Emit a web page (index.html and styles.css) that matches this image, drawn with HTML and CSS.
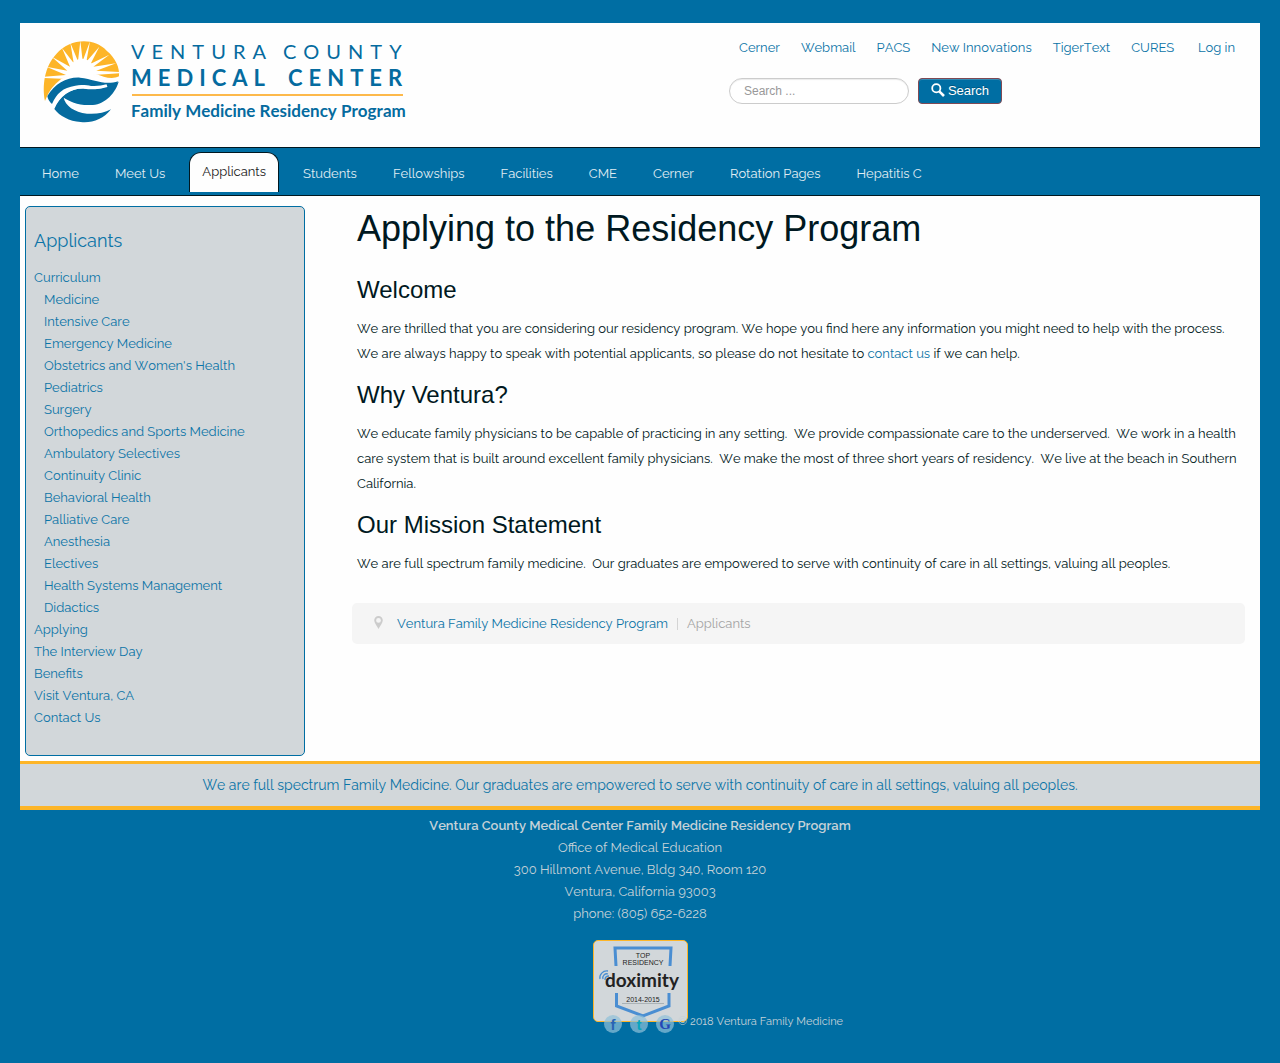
FILE: index.html
```html
<!DOCTYPE html>
<html lang="en">
<head>
<meta charset="utf-8">
<meta name="viewport" content="width=device-width, initial-scale=1">
<title>Applicants - Ventura Family Medicine Residency Program</title>
<link rel="stylesheet" href="styles.css">
</head>
<body>
<div class="page">
  <header class="header">
    <a class="logo" href="#" aria-label="Ventura County Medical Center home">
      <svg width="380" height="90" viewBox="0 0 380 90">
        <svg width="90" height="90" viewBox="0 0 270 270">
          <path fill="#fdb528" d="M27 195C18 150 25 92 61 54C100 9 171 2 212 44C239 66 252 96 249 121C226 132 203 122 178 113C145 104 98 108 66 137C47 153 36 171 27 195Z"/>
          <path fill="#fff" d="M24 122L90 117L31 92L94 104L47 62L102 92L78 36L113 81L103 20L126 76L133 14L140 75L162 16L151 77L190 32L164 83L220 56L172 92L240 82L181 104L250 108V112L184 116C150 108 105 113 78 128L24 126Z"/>
          <circle cx="138" cy="104" r="36" fill="#fff"/>
          <path fill="#fff" d="M30 197C38 160 79 117 127 116C180 116 205 138 250 124V142L55 215Z"/>
          <path fill="#056b9f" d="M34 180C58 142 92 123 132 125C177 130 203 149 247 136C230 158 204 157 180 153C150 147 135 146 118 149C80 155 62 172 48 204Q36 194 34 180Z"/>
          <path fill="#056b9f" d="M55 219C71 180 107 155 145 158C188 165 213 151 248 137C235 180 197 211 157 207C123 207 99 195 83 185C87 208 115 229 153 233C181 235 204 231 225 220C203 250 166 262 134 258C100 256 71 240 55 219Z"/>
          <path fill="none" stroke="#fff" stroke-width="9" d="M51 213C76 161 120 149 160 154C183 156 201 153 213 149"/>
        </svg>
        <g fill="#056b9f" class="logo-text">
          <text class="logo-light" x="95" y="23">VENTURA</text>
          <text class="logo-light" x="247" y="23">COUNTY</text>
          <text class="logo-bold" x="95" y="50">MEDICAL</text>
          <text class="logo-bold" x="252" y="50">CENTER</text>
          <text class="logo-sub" x="95" y="81">Family Medicine Residency Program</text>
        </g>
        <path fill="#fdb94b" d="M96 58h271v2H96z"/>
      </svg>
    </a>
    <div class="tools">
      <nav class="quick" aria-label="Quick links">
        <a href="#">Cerner</a><a href="#">Webmail</a><a href="#">PACS</a><a href="#">New Innovations</a><a href="#">TigerText</a><a href="#">CURES</a><a class="login" href="#">Log in</a>
      </nav>
      <form class="search">
        <input type="search" placeholder="Search ..." aria-label="Search">
        <button type="button"><svg width="14" height="14" viewBox="0 0 14 14"><circle cx="5.3" cy="5.3" r="4.1" fill="none" stroke="#fff" stroke-width="1.8"/><path d="M8.3 8.3L13 13" stroke="#fff" stroke-width="2.6"/></svg>Search</button>
      </form>
    </div>
  </header>
  <nav class="menu" aria-label="Main menu">
    <a href="#">Home</a><a href="#">Meet Us</a><a class="active" href="#">Applicants</a><a href="#">Students</a><a href="#">Fellowships</a><a href="#">Facilities</a><a href="#">CME</a><a href="#">Cerner</a><a href="#">Rotation Pages</a><a href="#">Hepatitis C</a>
  </nav>
  <div class="body">
    <aside class="side">
      <h3>Applicants</h3>
      <ul>
        <li><a href="#">Curriculum</a>
          <ul>
            <li><a href="#">Medicine</a></li>
            <li><a href="#">Intensive Care</a></li>
            <li><a href="#">Emergency Medicine</a></li>
            <li><a href="#">Obstetrics and Women's Health</a></li>
            <li><a href="#">Pediatrics</a></li>
            <li><a href="#">Surgery</a></li>
            <li><a href="#">Orthopedics and Sports Medicine</a></li>
            <li><a href="#">Ambulatory Selectives</a></li>
            <li><a href="#">Continuity Clinic</a></li>
            <li><a href="#">Behavioral Health</a></li>
            <li><a href="#">Palliative Care</a></li>
            <li><a href="#">Anesthesia</a></li>
            <li><a href="#">Electives</a></li>
            <li><a href="#">Health Systems Management</a></li>
            <li><a href="#">Didactics</a></li>
          </ul>
        </li>
        <li><a href="#">Applying</a></li>
        <li><a href="#">The Interview Day</a></li>
        <li><a href="#">Benefits</a></li>
        <li><a href="#">Visit Ventura, CA</a></li>
        <li><a href="#">Contact Us</a></li>
      </ul>
    </aside>
    <main class="content">
      <article>
        <h1>Applying to the Residency Program</h1>
        <h2>Welcome</h2>
        <p>We are thrilled that you are considering our residency program. We hope you find here any information you might need to help with the process. We are always happy to speak with potential applicants, so please do not hesitate to <a href="#">contact us</a> if we can help.</p>
        <h2>Why Ventura?</h2>
        <p>We educate family physicians to be capable of practicing in any setting.&nbsp; We provide compassionate care to the underserved.&nbsp; We work in a health care system that is built around excellent family physicians.&nbsp; We make the most of three short years of residency.&nbsp; We live at the beach in Southern California.</p>
        <h2>Our Mission Statement</h2>
        <p>We are full spectrum family medicine.&nbsp; Our graduates are empowered to serve with continuity of care in all settings, valuing all peoples.</p>
      </article>
      <nav class="crumbs" aria-label="Breadcrumb">
        <svg width="9" height="13" viewBox="0 0 9 13"><path fill="#ccc" fill-rule="evenodd" d="M4.500 0A4.300 4.300 0 0 0 .2 4.300C.2 7 3 10 4.500 13C6 10 8.800 7 8.800 4.300A4.300 4.300 0 0 0 4.500 0ZM4.500 2A2.400 2.400 0 1 1 4.500 6.800A2.400 2.400 0 0 1 4.500 2Z"/></svg>
        <a href="#">Ventura Family Medicine Residency Program</a><span class="current">Applicants</span>
      </nav>
    </main>
  </div>
  <div class="banner">We are full spectrum Family Medicine. Our graduates are empowered to serve with continuity of care in all settings, valuing all peoples.</div>
  <footer class="footer">
    <address>
      <strong>Ventura County Medical Center Family Medicine Residency Program</strong><br>
      Office of Medical Education<br>
      300 Hillmont Avenue, Bldg 340, Room 120<br>
      Ventura, California 93003<br>
      phone: (805) 652-6228
    </address>
    <a class="badge" href="#" aria-label="Doximity top residency 2014-2015">
      <svg width="93" height="80" viewBox="0 0 93 80">
        <g fill="none" stroke="#4a8ed2" stroke-width="3">
          <path d="M22 25L21 7H77L76 25"/>
          <path d="M22.500 52V65L49 75L75 65V52"/>
          <path stroke-width="1.300" d="M6 38C5 34 9 29 14 30M9 38C8 35 11 32 14 33M11 39C11 37 12 35 15 35"/>
        </g>
        <path stroke="#aab2b6" d="M28 62.500H70"/>
        <g text-anchor="middle" fill="#222">
          <text class="badge-small" x="49" y="17">TOP</text>
          <text class="badge-small" x="49" y="24">RESIDENCY</text>
          <text class="badge-name" x="48" y="46">doximity</text>
          <text class="badge-small" x="49" y="61">2014-2015</text>
        </g>
      </svg>
    </a>
    <div class="legal">
      <a href="#" aria-label="Facebook"><svg width="18" height="18" viewBox="0 0 18 18"><circle cx="9" cy="9" r="9" fill="#8fc0d8" opacity=".7"/><text class="glyph" x="9" y="15" fill="#2864b4">f</text></svg></a>
      <a href="#" aria-label="Twitter"><svg width="18" height="18" viewBox="0 0 18 18"><circle cx="9" cy="9" r="9" fill="#8fc0d8" opacity=".7"/><text class="glyph" x="9" y="15" fill="#08a5bd">t</text></svg></a>
      <a href="#" aria-label="Google"><svg width="18" height="18" viewBox="0 0 18 18"><circle cx="9" cy="9" r="9" fill="#8fc0d8" opacity=".7"/><text class="glyph glyph-serif" x="9" y="14" fill="#2447b5">G</text></svg></a>
      <span>© 2018 Ventura Family Medicine</span>
    </div>
  </footer>
</div>
</body>
</html>
```
FILE: styles.css
```css
* { box-sizing: border-box; }
body {
  margin: 0;
  background: #006ea3;
  color: #001821;
  font: 13px/22px Raleway, Lato, sans-serif;
  font-kerning: none;
}
a { color: #0b74a7; text-decoration: none; }
.page { padding: 23px 20px 29px; }

.header {
  display: flex;
  justify-content: space-between;
  min-height: 124px;
  padding: 13px 25px 13px 16px;
  background: #fefefe;
}
.logo svg { display: block; }
.logo-text { font-family: Lato, sans-serif; }
.logo-light { font-size: 20px; letter-spacing: 7px; }
.logo-bold { font-size: 22px; font-weight: 700; letter-spacing: 6px; }
.logo-sub { font-size: 17px; font-weight: 700; }
.tools { width: 506px; padding-top: 1px; }
.quick { display: flex; gap: 21px; padding-left: 10px; }
.login { margin-left: auto; }
.search { display: flex; gap: 9px; margin-top: 19px; }
.search input {
  width: 180px;
  height: 26px;
  padding: 0 14px;
  border: 1px solid #ccc;
  border-radius: 13px;
  background: #fff;
  box-shadow: inset 0 1px 1px rgba(0, 0, 0, .08);
  font: 12px "Liberation Sans", sans-serif;
}
.search input::placeholder { color: #999; }
.search button {
  display: flex;
  justify-content: center;
  gap: 3px;
  width: 84px;
  height: 26px;
  padding: 4px 0;
  border: 1px solid #804a55;
  border-radius: 4px;
  background: #006ea3;
  box-shadow: inset 0 1px 0 rgba(255, 255, 255, .2);
  color: #fff;
  font: 13px/16px "Liberation Sans", sans-serif;
  text-shadow: 0 -1px 0 rgba(0, 0, 0, .25);
}

.menu {
  display: flex;
  align-items: flex-start;
  gap: 12px;
  padding: 4px 10px 2px;
  border: solid #001821;
  border-width: 1px 0;
}
.menu a { padding: 11px 12px 8px; color: #e0edf3; }
.menu .active {
  padding: 8px 12px 9px;
  border: solid #001821;
  border-width: 1px 1px 0;
  border-radius: 12px 12px 0 0;
  background: #fefefe;
  color: #222;
}

.body {
  display: grid;
  grid-template-columns: 280px minmax(0, 1fr);
  gap: 47px;
  padding: 10px 15px 5px 5px;
  background: #fefefe;
}
.side {
  padding: 23px 8px 26px;
  border: 1px solid #006ea3;
  border-radius: 5px;
  background: #d2d7da;
}
.side h3 {
  margin: 0 0 15px;
  color: #0b74a7;
  font-size: 18px;
  font-weight: 400;
  line-height: 22px;
}
.side ul { margin: 0; padding: 0; list-style: none; }
.side ul ul { padding-left: 10px; }

.content article { padding: 0 5px; }
h1, h2 { font-family: "Liberation Sans", sans-serif; font-weight: 400; font-kerning: auto; }
h1 { margin: 0 0 16px; font-size: 36px; line-height: 46px; }
h2 { margin: 0 0 4px; font-size: 24px; line-height: 44px; }
p { margin: 0; line-height: 25px; }
p + h2 { margin-top: 7px; }
.crumbs {
  display: flex;
  align-items: center;
  margin-top: 27px;
  padding: 10px 22px 9px;
  border-radius: 5px;
  background: #f5f5f5;
}
.crumbs svg { margin-bottom: 3px; }
.crumbs a { margin-left: 14px; }
.current {
  margin-left: 9px;
  padding-left: 9px;
  border-left: 1px solid #d4d4d4;
  color: #a4a4a4;
  line-height: 12px;
}

.banner {
  padding: 10px;
  border: solid #fdb528;
  border-width: 3px 0 4px;
  background: #d2d7da;
  color: #0b74a7;
  font-size: 14px;
  text-align: center;
}
.footer {
  display: flex;
  flex-direction: column;
  align-items: center;
  padding-top: 5px;
  color: #c6d2d8;
}
address { font-style: normal; text-align: center; }
address strong { font-weight: 600; }
.badge {
  margin-top: 15px;
  border: 1px solid #fdb528;
  border-radius: 5px;
  background: #d2d7da;
}
.badge svg { display: block; }
.badge-small { font: 7px "Liberation Sans", sans-serif; }
.badge-name { font: 700 19px Lato, sans-serif; }
.legal {
  display: flex;
  align-items: center;
  gap: 8px;
  margin-top: -9px;
  padding-left: 167px;
  position: relative;
  font-size: 11px;
}
.legal svg { display: block; }
.legal span { margin-left: -4px; line-height: 18px; padding-bottom: 4px; }
.glyph { font: 700 15px "Liberation Sans", sans-serif; text-anchor: middle; }
.glyph-serif { font-family: "Liberation Serif", serif; }
```
